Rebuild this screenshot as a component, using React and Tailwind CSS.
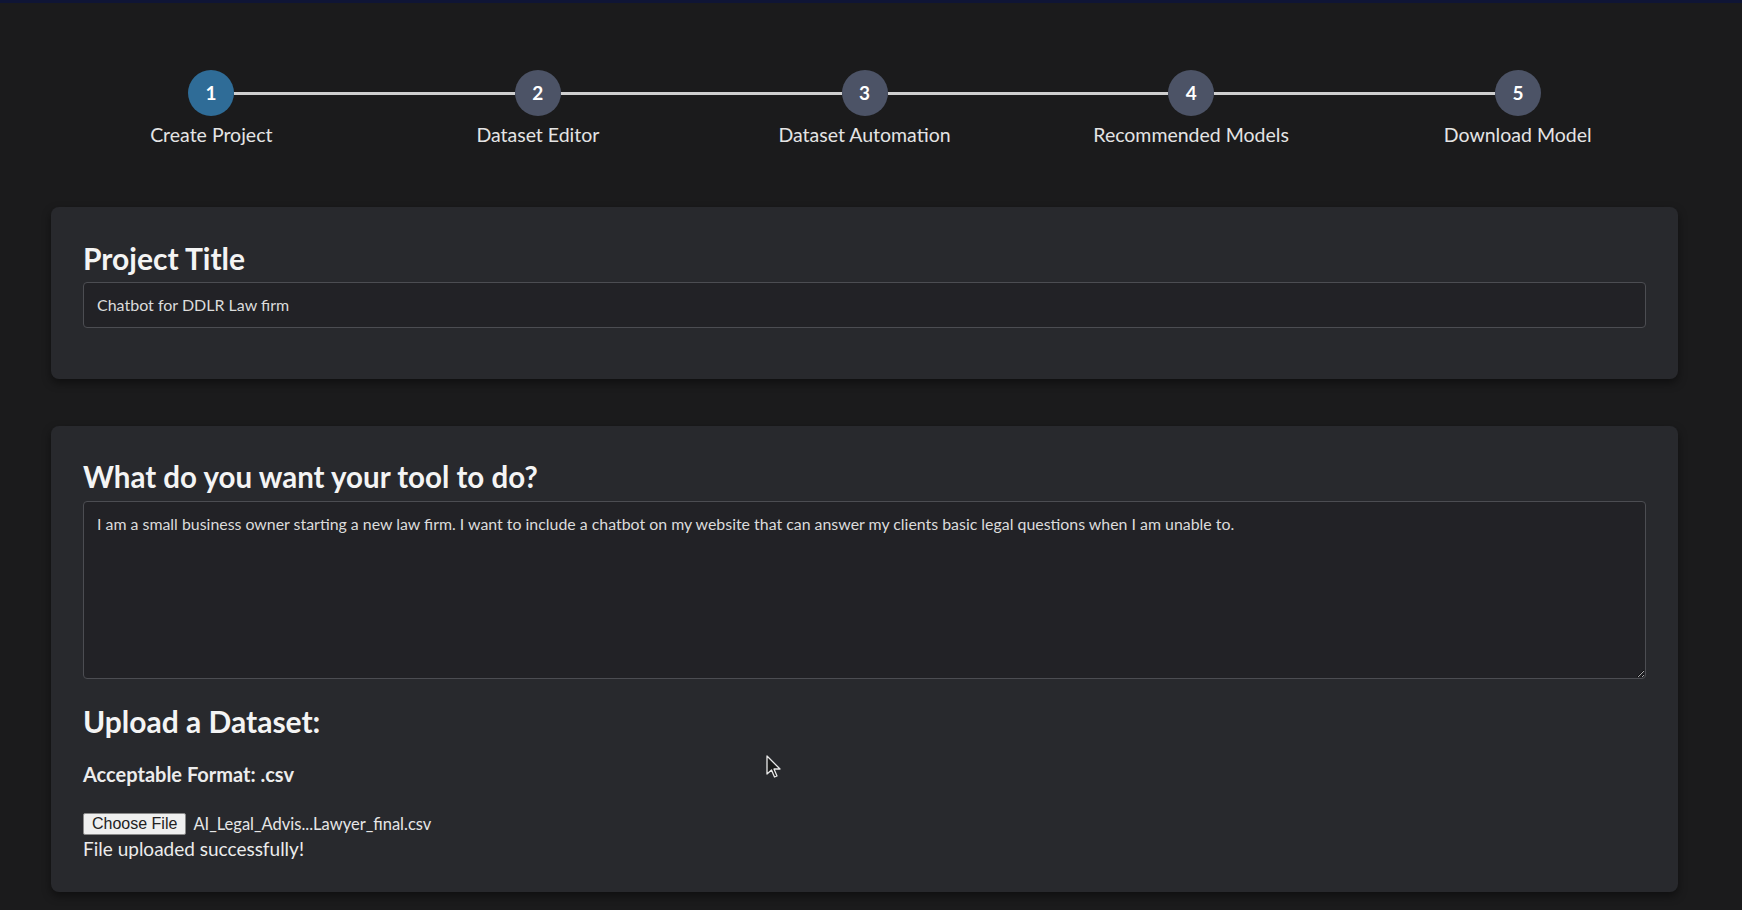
import React from "react";

const steps = ["Create Project", "Dataset Editor", "Dataset Automation", "Recommended Models", "Download Model"];

function Cursor() {
  return (
    <svg className="absolute left-[766px] top-[755px]" width="16" height="24" viewBox="0 0 16 24">
      <path d="M1 1 L1 19 L5.5 15 L8.5 22 L11 21 L8 14 L14 14 Z" fill="#1a1a1a" stroke="#e8e8e8" strokeWidth="1.3" strokeLinejoin="round" />
    </svg>
  );
}

export default function App() {
  const font = { fontFamily: "Lato, 'Noto Sans', sans-serif" };
  return (
    <div className="relative min-h-screen w-full bg-[#1b1b1c] text-[#e6e6e6]" style={font}>
      <div className="h-[3px] w-full bg-[#0f1535]" />
      <div className="pl-[51px] pr-[64px]">
        {/* Stepper */}
        <div className="-mx-[3px] pt-[67px]">
          <div className="flex items-center px-[140px]">
            {steps.map((s, i) => (
              <React.Fragment key={s}>
                <div
                  className={
                    "flex h-[46px] w-[46px] shrink-0 items-center justify-center rounded-full text-[19px] font-bold text-white " +
                    (i === 0 ? "bg-[#2f6c97]" : "bg-[#4c5366]")
                  }
                >
                  {i + 1}
                </div>
                {i < steps.length - 1 && <div className="h-[3px] flex-1 bg-[#cfcfcf]" />}
              </React.Fragment>
            ))}
          </div>
          <div className="mt-[7px] grid grid-cols-5">
            {steps.map((s) => (
              <div key={s} className="text-center text-[19.5px] leading-[24px] text-[#e4e4e4]">
                {s}
              </div>
            ))}
          </div>
        </div>

        {/* Card 1 */}
        <div className="mt-[60px] rounded-[8px] bg-[#28292d] px-[32px] pb-[51px] pt-[34px] shadow-[0_4px_10px_rgba(0,0,0,0.45)]">
          <h2 className="text-[30px] font-bold leading-[34px] text-[#f4f4f4]">Project Title</h2>
          <input
            readOnly
            value="Chatbot for DDLR Law firm"
            className="mt-[7px] block h-[46px] w-full rounded-[4px] border border-[#4c4d52] bg-[#222226] px-[13px] pb-[2px] text-[16px] text-[#dcdcdc] outline-none"
            style={font}
          />
        </div>

        {/* Card 2 */}
        <div className="mt-[47px] rounded-[8px] bg-[#28292d] px-[32px] pb-[32px] pt-[34px] shadow-[0_4px_10px_rgba(0,0,0,0.45)]">
          <h2 className="text-[29.5px] font-bold leading-[34px] text-[#f4f4f4]">What do you want your tool to do?</h2>
          <textarea
            readOnly
            defaultValue="I am a small business owner starting a new law firm. I want to include a chatbot on my website that can answer my clients basic legal questions when I am unable to."
            className="mt-[7px] block h-[178px] w-full rounded-[4px] border border-[#4c4d52] bg-[#222226] px-[13px] pt-[12px] text-[15.9px] leading-[20px] text-[#dcdcdc] outline-none"
            style={font}
          />
          <h2 className="mt-[25px] text-[30px] font-bold leading-[34px] text-[#f4f4f4]">Upload a Dataset:</h2>
          <p className="mt-[26px] text-[20px] font-bold leading-[20px] text-[#ececec]">Acceptable Format: .csv</p>
          <div className="mt-[28px] flex items-center">
            <span
              className="flex h-[22px] items-center rounded-[2px] border border-[#8a8a8a] bg-[#efefef] px-[8px] text-[16px] text-[#222]"
              style={{ fontFamily: "'Liberation Sans', Arial, sans-serif" }}
            >
              Choose File
            </span>
            <span className="ml-[7px] text-[16.5px] text-[#e6e6e6]">AI_Legal_Advis...Lawyer_final.csv</span>
          </div>
          <p className="mt-[1px] text-[19px] leading-[22px] text-[#ececec]">File uploaded successfully!</p>
        </div>
      </div>
      <Cursor />
    </div>
  );
}
